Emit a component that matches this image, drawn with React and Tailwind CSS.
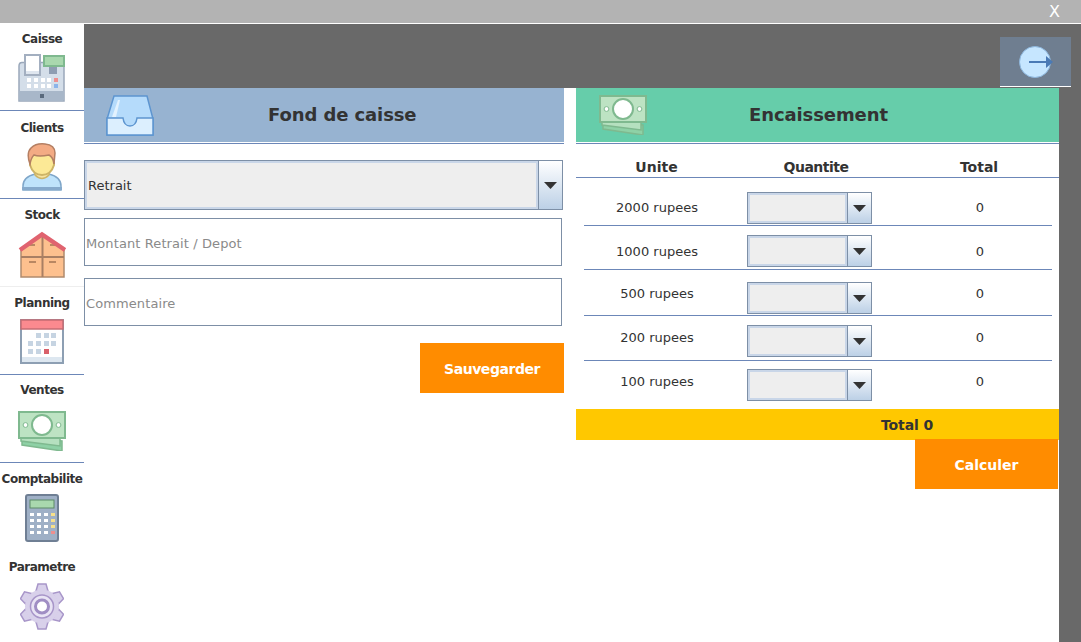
function Caret() {
  return (
    <svg width="13" height="7" viewBox="0 0 13 7">
      <path d="M0 0H13L6.5 7Z" fill="#333333" />
    </svg>
  );
}
function Combo({ children, wide }) {
  return (
    <div className={`flex border border-[#7d8fa6] bg-[#eeeeee] ${wide ? "h-[50px] w-[479px]" : "h-[32px] w-[125px]"}`}>
      <div className="flex min-w-0 flex-1 items-center border-2 border-[#c9d6e8] pl-px pt-[2px] text-[13px] text-[#333333]">
        {children}
      </div>
      <div className="flex w-[24px] shrink-0 items-center justify-center border-l border-[#7d8fa6] bg-gradient-to-b from-white to-[#bcd0e6]">
        <Caret />
      </div>
    </div>
  );
}
function Cash() {
  return (
    <svg width="48" height="40" viewBox="0 0 48 40" className="block">
      <path d="M4 26L44 30V40L4 34Z" fill="#8ed1a6" stroke="#7fb98f" strokeWidth="1.5" />
      <path d="M3 24L42 27V35L3 30Z" fill="#b5e0bf" stroke="#7fb98f" strokeWidth="1.5" />
      <rect x="1" y="1" width="46" height="26" fill="#bde3c3" stroke="#7fb98f" strokeWidth="2" />
      <circle cx="24" cy="14" r="10" fill="#fff" stroke="#7fb98f" strokeWidth="2" />
      <circle cx="7.5" cy="14" r="2.4" fill="#fff" stroke="#7fb98f" />
      <circle cx="40.5" cy="14" r="2.4" fill="#fff" stroke="#7fb98f" />
    </svg>
  );
}
function Register() {
  return (
    <svg width="48" height="48" viewBox="0 0 48 48" className="block">
      <path d="M4 8.5H43Q46 8.5 46 12V47H1V12Q1 8.5 4 8.5Z" fill="#d4dee9" stroke="#9aa8ba" strokeWidth="1.5" />
      <rect x="31" y="12" width="8" height="8" fill="#8e9db2" />
      <rect x="7" y="1" width="15" height="20" fill="#dfe6ef" stroke="#a3afc0" strokeWidth="2" />
      <rect x="8" y="2" width="13" height="15" fill="#fff" />
      <rect x="26" y="2" width="20" height="10" fill="#a9d8ae" stroke="#7fb98f" strokeWidth="2" />
      <path d="M1 37H46V45Q46 47 44 47H3Q1 47 1 45Z" fill="#a8b7c9" />
      <rect x="22" y="40" width="4" height="4" fill="#5a6a7d" />
      {[9, 16, 23, 29].map((x) => (
        <g key={x}>
          <rect x={x} y="24" width="4" height="4" fill="#fff" />
          <rect x={x} y="30" width="4" height="4" fill="#fff" />
        </g>
      ))}
      <rect x="36" y="24" width="4" height="4" fill="#ee8f8f" />
      <rect x="36" y="30" width="4" height="4" fill="#8bb4ea" />
    </svg>
  );
}
function Person() {
  return (
    <svg width="42" height="49" viewBox="0 0 42 49" className="block">
      <path d="M2 47V43Q2 34 14 31H28Q40 34 40 43V47Z" fill="#bfe3fb" stroke="#7fa6c9" strokeWidth="1.5" />
      <rect x="1" y="44" width="40" height="3" fill="#86aacc" />
      <path d="M14 26V32Q21 39 28 32V26Z" fill="#f7e3a0" stroke="#cdb466" strokeWidth="1.5" />
      <path d="M9 12V22Q12 32 21 32Q30 32 33 22V12Z" fill="#fce996" stroke="#cdb466" strokeWidth="2" />
      <path d="M9 21Q5 10 10 5Q15 0 24 1Q34 2 34 10L33 21Q32 14 28 12Q18 14 13 12Q10 15 9 21Z" fill="#f3ab84" stroke="#b47f63" strokeWidth="1.5" />
    </svg>
  );
}
function Box() {
  return (
    <svg width="48" height="47" viewBox="0 0 48 47" className="block">
      <path d="M3 19L24 3L46 19V46H3Z" fill="#fdc08e" stroke="#b08a6e" strokeWidth="1.5" />
      <path d="M3 26H46M24.5 4V46" stroke="#a97f63" strokeWidth="2" />
      <path d="M11 14H17M32 14H38M11 31H18M31 31H38" stroke="#b98762" strokeWidth="2" />
      <path d="M2 19L24 3.5L47 19" fill="none" stroke="#e0636f" strokeWidth="4.5" />
    </svg>
  );
}
function Calendar() {
  return (
    <svg width="44" height="45" viewBox="0 0 44 45" className="block">
      <rect x="1" y="1" width="42" height="43" fill="#fff" stroke="#8d9fb3" strokeWidth="2" />
      <rect x="1" y="1" width="42" height="9" fill="#fb8a8f" stroke="#c56c73" strokeWidth="1.5" />
      <rect x="2" y="38" width="40" height="5" fill="#dde7f0" />
      {[[16, 14], [24, 14], [31, 14], [8, 22], [16, 22], [24, 22], [31, 22], [8, 30], [16, 30]].map(([x, y]) => (
        <rect key={`${x}${y}`} x={x} y={y} width="5" height="5" fill="#c6d4e2" />
      ))}
      <rect x="24" y="30" width="5" height="5" fill="#d9606a" />
    </svg>
  );
}
function Calc() {
  return (
    <svg width="34" height="48" viewBox="0 0 34 48" className="block">
      <rect x="1" y="1" width="32" height="46" rx="2" fill="#9fb0c6" stroke="#6f7f94" strokeWidth="2" />
      <rect x="5" y="6" width="24" height="8" fill="#a9d8ae" stroke="#5d8a68" />
      {[19, 25, 31, 37].map((y) =>
        [5, 12, 19, 26].map((x) => (
          <rect
            key={`${x}-${y}`}
            x={x}
            y={y}
            width="4"
            height="3"
            fill={x === 26 ? (y === 37 ? "#ee8f8f" : "#f7e08a") : "#fff"}
          />
        ))
      )}
    </svg>
  );
}
function Gear() {
  const teeth = [0, 60, 120, 180, 240, 300];
  return (
    <svg width="44" height="47" viewBox="0 0 44 47" className="block">
      <g stroke="#a896c9" strokeWidth="1.5" fill="#d8d0ea">
        {teeth.map((a) => (
          <path key={a} d="M16 8L18 1H26L28 8Z" transform={`rotate(${a} 22 23.5)`} />
        ))}
      </g>
      <circle cx="22" cy="23.5" r="17" fill="#d8d0ea" />
      <circle cx="22" cy="23.5" r="11.5" fill="#e9e4f4" stroke="#a896c9" strokeWidth="1.5" />
      <circle cx="22" cy="23.5" r="6.5" fill="#fff" stroke="#a08ec4" strokeWidth="3" />
    </svg>
  );
}
function Tray() {
  return (
    <svg width="48" height="41" viewBox="0 0 48 41" className="block">
      <path d="M8 1H41L47 24V40H1V24Z" fill="#b5dbfb" stroke="#5d95d0" strokeWidth="1.5" />
      <path d="M12 5L6 22H10L14 5Z" fill="#e3f2fe" />
      <path d="M1 23H17Q18 31 24 31Q30 31 31 23H47V40H1Z" fill="#dceffe" stroke="#5d95d0" strokeWidth="1.5" />
    </svg>
  );
}
const nav = [
  ["Caisse", <Register />, "h-[87px] border-[#6c87b8] pt-[8px]", "mt-[7px]"],
  ["Clients", <Person />, "h-[88px] border-[#6c87b8] pt-[10px]", "mt-[7px]"],
  ["Stock", <Box />, "h-[88px] border-[#eeeeee] pt-[9px]", "mt-[8px]"],
  ["Planning", <Calendar />, "h-[88px] border-[#6c87b8] pt-[9px]", "mt-[8px]"],
  ["Ventes", <Cash />, "h-[88px] border-[#6c87b8] pt-[8px]", "mt-[13px]"],
  ["Comptabilite", <Calc />, "h-[88px] border-transparent pt-[9px]", "mt-[7px]"],
  ["Parametre", <Gear />, "h-[88px] border-transparent pt-[9px]", "mt-[8px]"],
];
const rows = [
  ["2000 rupees", "h-[48px] border-b", "pt-[22px]", "pt-[14px]"],
  ["1000 rupees", "h-[44px] border-b", "pt-[18px]", "pt-[9px]"],
  ["500 rupees", "h-[46px] border-b", "pt-[16px]", "pt-[12px]"],
  ["200 rupees", "h-[45px] border-b", "pt-[14px]", "pt-[9px]"],
  ["100 rupees", "h-[48px]", "pt-[13px]", "pt-[8px]"],
];

export default function App() {
  return (
    <div className="flex h-[642px] w-[1081px] flex-col overflow-hidden bg-white font-['DejaVu_Sans',sans-serif] text-[#333333]">
      <div className="flex h-[24px] shrink-0 items-center justify-end border-b border-white bg-[#b3b3b3] pr-[21px] text-[16px] text-white">
        X
      </div>
      <div className="flex min-h-0 flex-1">
        <aside className="flex w-[84px] shrink-0 flex-col">
          {nav.map(([label, icon, box, gap]) => (
            <div key={label} className={`flex shrink-0 flex-col items-center border-b ${box}`}>
              <div className="text-[12px] leading-[15px] font-bold tracking-[-0.5px] whitespace-nowrap">{label}</div>
              <div className={gap}>{icon}</div>
            </div>
          ))}
        </aside>
        <div className="flex min-w-0 flex-1 flex-col">
          <div className="flex h-[64px] shrink-0 items-start justify-end bg-[#696969] pr-[10px] pt-[13px]">
            <div className="flex h-[50px] w-[71px] items-center justify-center border-b border-white bg-[#6f7e90] pt-px">
              <svg width="36" height="32" viewBox="0 0 36 32">
                <circle cx="17" cy="16" r="15.5" fill="#c6e6ff" stroke="#8cb5dc" />
                <path d="M11 16H30" stroke="#4a7ab5" strokeWidth="2" />
                <path d="M28 10L35 16L28 22Z" fill="#4a7ab5" />
              </svg>
            </div>
          </div>
          <div className="flex min-h-0 flex-1">
            <main className="flex min-w-0 flex-1 gap-[12px] bg-white">
              <section className="w-[480px] shrink-0">
                <div className="flex h-[54px] items-center bg-[#97b3d1] pl-[22px]">
                  <Tray />
                  <h2 className="ml-[114px] pb-px text-[18px] font-bold tracking-[-0.1px] whitespace-nowrap">Fond de caisse</h2>
                </div>
                <div className="mt-px h-[2px] border-t border-[#6c87b8]" />
                <div className="mt-[15px]">
                  <Combo wide>Retrait</Combo>
                </div>
                <input
                  readOnly
                  placeholder="Montant Retrait / Depot"
                  className="mt-[8px] block h-[48px] w-[478px] border border-[#7d8fa6] bg-white pl-px pt-[2px] text-[13px] tracking-[0.1px] outline-none placeholder:text-[#8a8a8a]"
                />
                <input
                  readOnly
                  placeholder="Commentaire"
                  className="mt-[12px] block h-[48px] w-[478px] border border-[#7d8fa6] bg-white pl-px pt-[2px] text-[13px] tracking-[0.1px] outline-none placeholder:text-[#8a8a8a]"
                />
                <div className="mt-[17px] flex justify-end">
                  <button className="h-[50px] w-[144px] bg-[#ff8c00] pt-[2px] text-[14px] font-bold tracking-[-0.45px] text-white">Sauvegarder</button>
                </div>
              </section>
              <section className="min-w-0 flex-1">
                <div className="flex h-[54px] items-center bg-[#66cdaa] pl-[23px]">
                  <Cash />
                  <h2 className="ml-[102px] pb-px text-[18px] font-bold tracking-[-0.1px] whitespace-nowrap">Encaissement</h2>
                </div>
                <div className="mt-px h-[2px] border-t border-[#6c87b8]" />
                <div className="grid h-[33px] grid-cols-[161px_158px_168px] items-end border-b border-[#6c87b8] pb-[2px] text-center text-[14px] leading-[15px] font-bold">
                  <div>Unite</div>
                  <div className="tracking-[-0.5px]">Quantite</div>
                  <div>Total</div>
                </div>
                <div className="pl-[8px] pr-[7px]">
                  {rows.map(([label, box, textTop, comboTop]) => (
                    <div key={label} className={`flex items-start border-[#6c87b8] text-[13px] leading-[16px] ${box}`}>
                      <div className={`w-[146px] text-center whitespace-nowrap ${textTop}`}>{label}</div>
                      <div className={`ml-[17px] w-[125px] ${comboTop}`}><Combo /></div>
                      <div className={`ml-[45px] w-[126px] text-center ${textTop}`}>0</div>
                    </div>
                  ))}
                </div>
                <div className="flex h-[31px] items-center bg-[#ffc800] pl-[305px] pt-[2px] text-[14px] font-bold tracking-[-0.1px]">Total 0</div>
                <div className="flex justify-end">
                  <button className="mr-px -mt-px h-[50px] w-[143px] bg-[#ff8c00] pt-[3px] text-[14px] font-bold text-white">Calculer</button>
                </div>
              </section>
            </main>
            <div className="w-[22px] shrink-0 bg-[#696969]" />
          </div>
        </div>
      </div>
    </div>
  );
}
